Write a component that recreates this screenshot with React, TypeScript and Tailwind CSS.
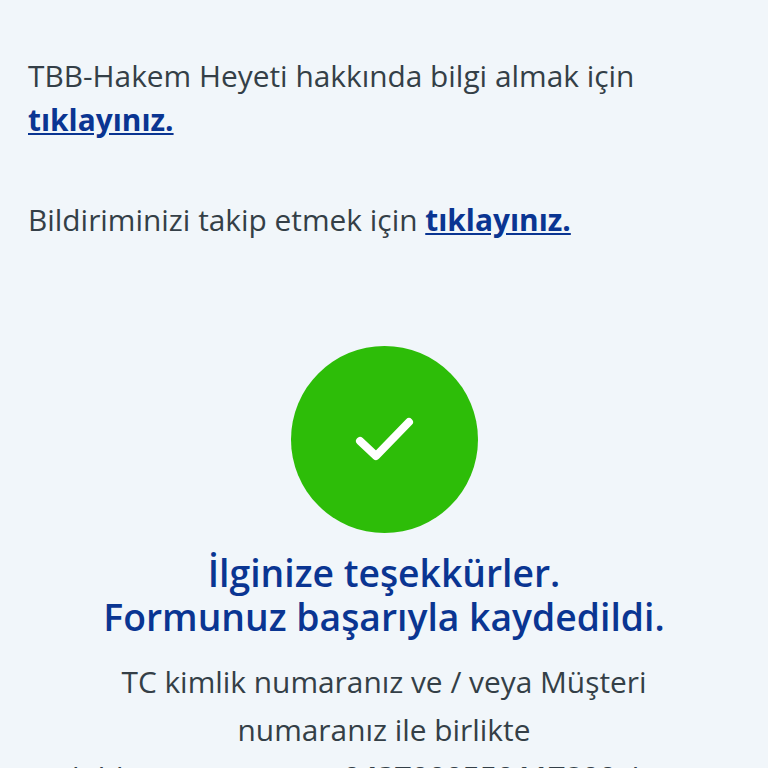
export default function App() {
  return (
    <div className="h-[768px] w-[768px] overflow-hidden bg-[#f1f6fa] px-7 pt-[54px] font-['Open_Sans',sans-serif] text-[#343f47]">
      <p className="text-[29.85px] leading-[44px]">
        TBB-Hakem Heyeti hakkında bilgi almak için{' '}
        <a className="font-bold text-[#0a3592] underline">tıklayınız.</a>
      </p>
      <p className="mt-[56px] text-[29.85px] leading-[44px]">
        Bildiriminizi takip etmek için{' '}
        <a className="font-bold text-[#0a3592] underline">tıklayınız.</a>
      </p>
      <div className="mt-[104px] flex flex-col items-center text-center">
        <div className="flex h-[187px] w-[187px] items-center justify-center rounded-full bg-[#2dbd08]">
          <svg className="ml-[2px]" width="60" height="46" viewBox="0 0 60 46" fill="none" stroke="white" strokeWidth="8" strokeLinecap="round" strokeLinejoin="round">
            <path d="M5 24 L21 39 L54 5" />
          </svg>
        </div>
        <h2 className="mt-[18px] text-[37.3px] font-semibold leading-[44px] text-[#0a3592]">
          İlginize teşekkürler.
          <br />
          Formunuz başarıyla kaydedildi.
        </h2>
        <p className="mt-[19px] w-[640px] text-[29.85px] leading-[48px]">
          TC kimlik numaranız ve / veya Müşteri
          <br />
          numaranız ile birlikte
          <br />
          <span className="mr-[40px]">
            bildirim numaranız <b>0437000550117800</b> ile
          </span>
        </p>
      </div>
    </div>
  );
}
